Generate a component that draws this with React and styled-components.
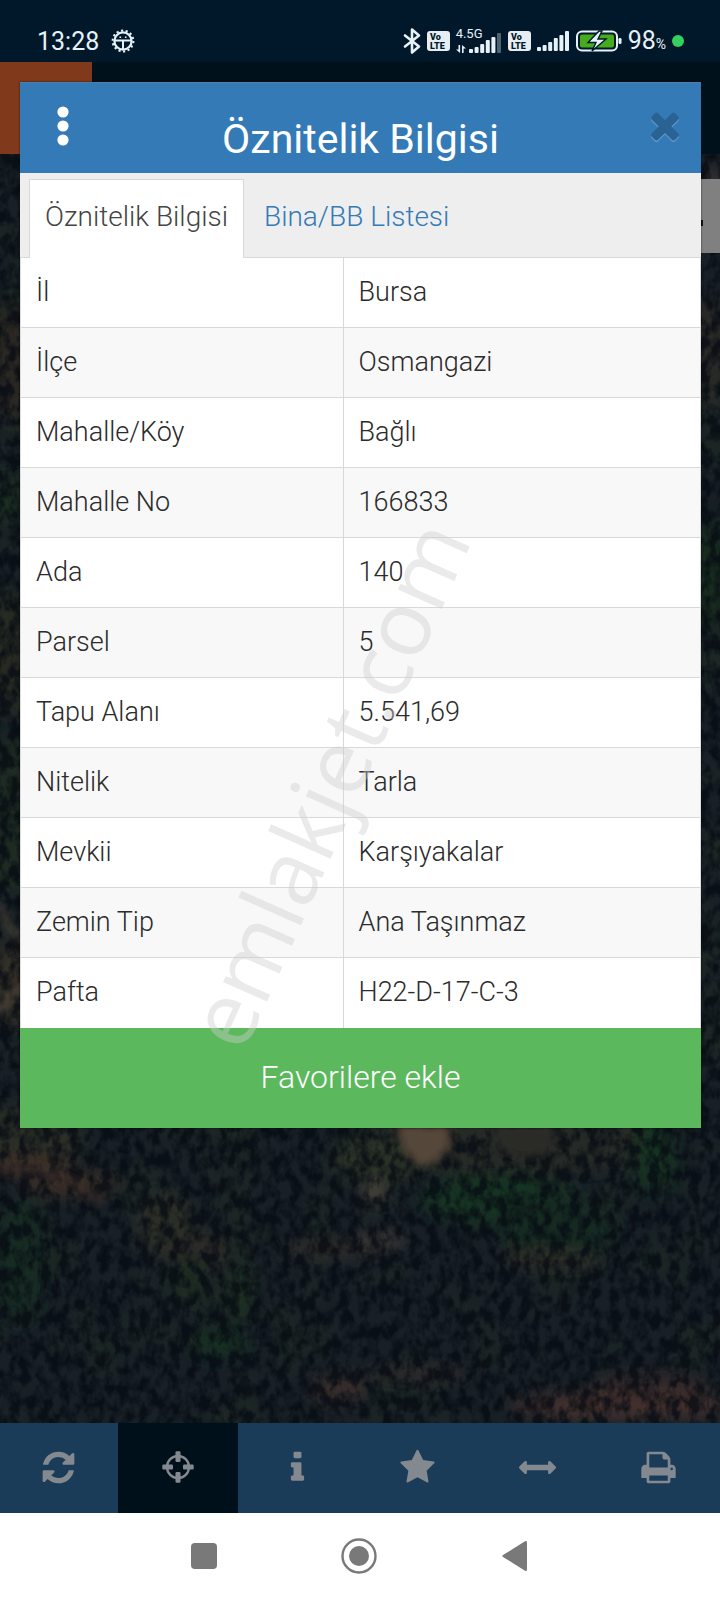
import React from "react";
import styled, { createGlobalStyle, css } from "styled-components";

const GlobalStyle = createGlobalStyle`
  *, *::before, *::after { box-sizing: border-box; }
  body {
    margin: 0;
    background: #ffffff;
    font-family: Roboto, "Liberation Sans", sans-serif;
  }
  button { font-family: inherit; cursor: pointer; }
`;

const Screen = styled.div`
  min-height: 100vh;
  display: flex;
  flex-direction: column;
`;

/* ---------- status bar ---------- */

const StatusBar = styled.header`
  height: 62px;
  flex: none;
  display: flex;
  align-items: flex-end;
  justify-content: space-between;
  padding: 0 36px 6px 37px;
  background: #01182b;
  color: #e6f2f8;
`;

const StatusGroup = styled.div`
  display: flex;
  align-items: center;
  height: 30px;
  gap: ${(p) => p.$gap || 0}px;
`;

const Clock = styled.time`
  padding-top: 2px;
  font-size: 25px;
  line-height: 30px;
  font-weight: 400;
`;

const NetworkStack = styled.div`
  display: flex;
  align-items: flex-end;
  justify-content: space-between;
  width: 46px;
  height: 24px;
  position: relative;
`;

const NetworkType = styled.span`
  position: absolute;
  left: 0;
  top: 0;
  font-size: 13px;
  line-height: 10px;
  font-weight: 400;
`;

const Battery = styled.span`
  display: flex;
  align-items: baseline;
  padding-top: 2px;
  font-size: 25px;
  line-height: 30px;
  font-weight: 400;
  small {
    font-size: 14px;
  }
`;

const ActiveDot = styled.span`
  width: 12px;
  height: 12px;
  border-radius: 50%;
  background: #34cf5c;
`;

/* ---------- app and map ---------- */

const Stage = styled.main`
  flex: 1;
  display: grid;
  grid-template: minmax(0, 1fr) / minmax(0, 1fr);
`;

const AppLayer = styled.div`
  grid-area: 1 / 1;
  display: flex;
  flex-direction: column;
`;

const AppBar = styled.div`
  height: 92px;
  flex: none;
  display: flex;
  background: #00111c;
`;

const AppMenu = styled.div`
  width: 92px;
  background: #803a1b;
`;

const MapArea = styled.div`
  flex: 1;
  position: relative;
  overflow: hidden;
  background: #10191d;
`;

const MapCanvas = styled.svg`
  position: absolute;
  inset: 0;
  width: 100%;
  height: 100%;
`;

const MapControl = styled.div`
  position: absolute;
  top: 25px;
  right: 0;
  width: 72px;
  height: 74px;
  display: flex;
  align-items: center;
  justify-content: center;
  background: #808080;
`;

/* ---------- dialog ---------- */

const DialogLayer = styled.div`
  grid-area: 1 / 1;
  z-index: 1;
  padding: 20px 19px 20px 20px;
`;

const Dialog = styled.section`
  position: relative;
  background: #ffffff;
  box-shadow: 0 0 2px rgba(0, 0, 0, 0.6);
`;

const DialogHeader = styled.div`
  height: 91px;
  display: grid;
  grid-template-columns: 86px 1fr 86px;
  align-items: center;
  background: #337ab7;
  border-top: 1px solid #4d7fab;
`;

const HeaderButton = styled.button`
  display: flex;
  align-items: center;
  justify-content: center;
  height: 60px;
  padding: 0 0 4px;
  border: 0;
  background: none;
  ${(p) =>
    p.$end &&
    css`
      padding-left: 14px;
    `}
`;

const DialogTitle = styled.h1`
  margin: 0;
  padding-top: 22px;
  text-align: center;
  font-size: 41px;
  line-height: 48px;
  font-weight: 400;
  color: #ffffff;
`;

const Tabs = styled.div`
  display: flex;
  align-items: flex-end;
  height: 85px;
  padding-left: 9px;
  background: #eeeeee;
  border-bottom: 1px solid #d8d8d8;
`;

const Tab = styled.button`
  height: 79px;
  margin-bottom: -1px;
  padding: 0 15px 4px;
  border: 1px solid transparent;
  border-bottom: 0;
  background: transparent;
  font-size: 28px;
  line-height: 32px;
  font-weight: 300;
  color: #337ab7;
  & + & {
    padding-left: 19px;
  }
  ${(p) =>
    p.$active &&
    css`
      background: #ffffff;
      border-color: #d8d8d8;
      color: #444444;
    `}
`;

const InfoTable = styled.table`
  width: 100%;
  table-layout: fixed;
  border-collapse: separate;
  border-spacing: 0;
  font-size: 27px;
  line-height: 32px;
  color: #2b2b2b;
  border-left: 1px solid #dddddd;
  border-right: 1px solid #dddddd;
`;

const InfoRow = styled.tr`
  background: #ffffff;
  &:nth-child(even) {
    background: #f8f8f8;
  }
  &:not(:last-child) > * {
    border-bottom: 1px solid #d8d8d8;
  }
`;

const cell = css`
  height: 70px;
  padding: 0 15px 2px;
  text-align: left;
  font-weight: 300;
`;

const InfoLabel = styled.th`
  ${cell}
  width: 47.5%;
  border-right: 1px solid #d8d8d8;
`;

const InfoValue = styled.td`
  ${cell}
`;

const FavoriteButton = styled.button`
  display: block;
  width: 100%;
  height: 100px;
  padding: 0 0 2px;
  border: 0;
  background: #5cb85c;
  color: #ffffff;
  font-size: 32px;
  line-height: 40px;
  font-weight: 300;
`;

const Watermark = styled.div`
  position: absolute;
  left: 45%;
  top: 67%;
  transform: translate(-50%, -50%) rotate(-66deg);
  font-family: "Open Sans", "Noto Sans", sans-serif;
  font-size: 90px;
  line-height: 90px;
  color: rgba(205, 205, 205, 0.42);
  white-space: nowrap;
  pointer-events: none;
`;

/* ---------- bottom bars ---------- */

const Toolbar = styled.nav`
  height: 90px;
  flex: none;
  display: grid;
  grid-template-columns: 118fr repeat(4, 120fr) 122fr;
  background: #1b3c59;
`;

const ToolButton = styled.button`
  display: flex;
  align-items: center;
  justify-content: center;
  padding: 0 1px 2px 0;
  border: 0;
  background: ${(p) => (p.$active ? "#00101b" : "transparent")};
  color: #83898f;
`;

const SystemNav = styled.nav`
  height: 87px;
  flex: none;
  display: flex;
  align-items: center;
  justify-content: center;
  gap: 115px;
  padding: 0 2px 2px 0;
  background: #ffffff;
`;

const NavButton = styled.button`
  width: 40px;
  height: 40px;
  display: flex;
  align-items: center;
  justify-content: center;
  padding: 0;
  border: 0;
  background: none;
  color: #797979;
`;

/* ---------- drawings ---------- */

const PATHS = {
  refresh:
    "M1639 1056q0 5-1 7-64 268-268 434.500t-478 166.500q-146 0-282.500-55t-243.500-157l-129 129q-19 19-45 19t-45-19-19-45v-448q0-26 19-45t45-19h448q26 0 45 19t19 45-19 45l-137 137q71 66 161 102t187 36q134 0 250-65t186-179q11-17 53-117 8-23 30-23h192q13 0 22.500 9.500t9.500 22.500zm25-800v448q0 26-19 45t-45 19h-448q-26 0-45-19t-19-45 19-45l138-138q-148-137-349-137-134 0-250 65t-186 179q-11 17-53 117-8 23-30 23h-199q-13 0-22.500-9.500t-9.500-22.500v-7q65-268 270-434.500t480-166.500q146 0 284 55.500t245 156.500l130-129q19-19 45-19t45 19 19 45z",
  info: "M1216 1344v128q0 26-19 45t-45 19h-512q-26 0-45-19t-19-45v-128q0-26 19-45t45-19h64v-384h-64q-26 0-45-19t-19-45v-128q0-26 19-45t45-19h384q26 0 45 19t19 45v576h64q26 0 45 19t19 45zm-128-1152v192q0 26-19 45t-45 19h-256q-26 0-45-19t-19-45v-192q0-26 19-45t45-19h256q26 0 45 19t19 45z",
  star: "M1728 647q0 22-26 48l-363 354 86 500q1 7 1 20 0 21-10.500 35.500t-30.500 14.500q-19 0-40-12l-449-236-449 236q-22 12-40 12-21 0-31.500-14.500t-10.500-35.500q0-6 2-20l86-500-364-354q-25-27-25-48 0-37 56-46l502-73 225-455q19-41 49-41t49 41l225 455 502 73q56 9 56 46z",
  measure:
    "M1792 896q0 26-19 45l-256 256q-19 19-45 19t-45-19-19-45v-128h-1024v128q0 26-19 45t-45 19-45-19l-256-256q-19-19-19-45t19-45l256-256q19-19 45-19t45 19 19 45v128h1024v-128q0-26 19-45t45-19 45 19l256 256q19 19 19 45z",
  print:
    "M448 1536h896v-256h-896v256zm0-640h896v-384h-160q-40 0-68-28t-28-68v-160h-640v640zm1152 64q0-26-19-45t-45-19-45 19-19 45 19 45 45 19 45-19 19-45zm128 0v416q0 13-9.500 22.500t-22.500 9.500h-224v160q0 40-28 68t-68 28h-960q-40 0-68-28t-28-68v-160h-224q-13 0-22.500-9.500t-9.500-22.500v-416q0-79 56.500-135.500t135.500-56.500h64v-544q0-40 28-68t68-28h672q40 0 88 20t76 48l152 152q28 28 48 76t20 88v256h64q79 0 135.500 56.500t56.500 135.500z",
  close:
    "M1490 1322q0 40-28 68l-136 136q-28 28-68 28t-68-28l-294-294-294 294q-28 28-68 28t-68-28l-136-136q-28-28-28-68t28-68l294-294-294-294q-28-28-28-68t28-68l136-136q28-28 68-28t68 28l294 294 294-294q28-28 68-28t68 28l136 136q28 28 28 68t-28 68l-294 294 294 294q28 28 28 68z",
};

function Glyph({ name, size = 37 }) {
  return (
    <svg width={size} height={size} viewBox="0 0 1792 1792" fill="currentColor" aria-hidden="true">
      <path d={PATHS[name]} />
    </svg>
  );
}

function LocateIcon() {
  return (
    <svg width="32" height="32" viewBox="0 0 32 32" fill="currentColor" aria-hidden="true">
      <circle cx="16" cy="16" r="11" fill="none" stroke="currentColor" strokeWidth="2.4" />
      {[0, 90, 180, 270].map((turn) => (
        <rect key={turn} x="13.500" y="0.300" width="5" height="10.700" rx="1.200" transform={`rotate(${turn} 16 16)`} />
      ))}
    </svg>
  );
}

function CloseIcon() {
  return (
    <svg width="42" height="44" viewBox="0 0 1792 1877" aria-hidden="true">
      <path d={PATHS.close} fill="#5d97c8" transform="translate(0 70)" />
      <path d={PATHS.close} fill="#2a6293" />
    </svg>
  );
}

function DotsIcon() {
  return (
    <svg width="12" height="40" viewBox="0 0 12 40" fill="#ffffff" aria-hidden="true">
      <circle cx="6" cy="6" r="5.600" />
      <circle cx="6" cy="20" r="5.600" />
      <circle cx="6" cy="34" r="5.600" />
    </svg>
  );
}

function WheelIcon() {
  return (
    <svg width="24" height="24" viewBox="0 0 24 24" fill="none" stroke="#e6f2f8" aria-hidden="true">
      <circle cx="12" cy="12" r="8.600" strokeWidth="2.200" />
      <circle cx="12" cy="12" r="10.400" strokeWidth="2" strokeDasharray="2.200 2.467" />
      <path d="M4 11.500h16M12 12v8" strokeWidth="2" />
      <path d="M8.500 8.200h1.600M13.900 8.200h1.600" strokeWidth="1.500" />
    </svg>
  );
}

function BluetoothIcon() {
  return (
    <svg width="18" height="28" viewBox="0 0 18 28" fill="none" stroke="#e6f2f8" strokeWidth="2.600" strokeLinejoin="round" strokeLinecap="round" aria-hidden="true">
      <path d="M2 8.500l14 11-7 6V2.500l7 6-14 11" />
    </svg>
  );
}

function VolteIcon() {
  return (
    <svg width="23" height="20" viewBox="0 0 23 20" aria-label="VoLTE">
      <rect width="23" height="20" rx="3" fill="#e6eef2" />
      <g fill="#01182b" fontFamily="Roboto, sans-serif" fontWeight="900">
        <text x="3" y="9" fontSize="9">Vo</text>
        <text x="3" y="18" fontSize="9">LTE</text>
      </g>
    </svg>
  );
}

function SignalIcon({ weak }) {
  return (
    <svg width="33" height="20" viewBox="0 0 33 20" fill="#e6f2f8" aria-hidden="true">
      {[4, 6, 9, 13, 16, 20].map((h, i) => (
        <rect key={i} x={i * 5.6} y={20 - h} width="4" height={h} rx="1" opacity={weak && i === 5 ? 0.35 : 1} />
      ))}
    </svg>
  );
}

function TrafficIcon() {
  return (
    <svg width="10" height="8" viewBox="0 0 10 8" fill="#e6f2f8" aria-hidden="true">
      <path d="M2.500 0h1.600v8L0 4.500h2.500zM6 0l4 3.500H7.600V8H6z" />
    </svg>
  );
}

function BatteryIcon() {
  return (
    <svg width="46" height="22" viewBox="0 0 46 22" aria-hidden="true">
      <rect x="1" y="1.500" width="40" height="19" rx="5" fill="none" stroke="#e6f2f8" strokeWidth="2" />
      <rect x="4" y="4.500" width="34" height="13" rx="2" fill="#46ab1d" />
      <rect x="42.500" y="8" width="3" height="6" rx="1.200" fill="#e6f2f8" />
      <path d="M23 1L12 12.500h8L16 21l14-12h-8l4-8z" fill="#e6f2f8" stroke="#01182b" strokeWidth="1.400" />
    </svg>
  );
}

const CLEARINGS = [
  [14, 210, 22, 60, "#2b2822"], [10, 345, 24, 26, "#1b2f20"], [12, 500, 26, 60, "#252b22"],
  [10, 660, 20, 80, "#1f2b22"], [12, 830, 20, 44, "#332f27"], [710, 40, 18, 26, "#353330"],
  [708, 200, 16, 60, "#2b2a26"], [708, 420, 16, 60, "#182a1f"], [20, 985, 60, 32, "#2c2d26"],
  [520, 985, 140, 38, "#252c28"], [380, 1005, 50, 24, "#2b3128"], [70, 1030, 50, 12, "#3a2e27"],
  [30, 1010, 44, 10, "#3a2d25"], [165, 1070, 30, 34, "#2c2d27"], [500, 1045, 80, 26, "#163122"],
  [560, 1075, 60, 34, "#162a20"], [655, 1000, 20, 40, "#183321"], [200, 1100, 30, 22, "#2a2a25"],
  [238, 1140, 12, 32, "#1d3324"], [190, 1130, 20, 28, "#1f2b22"], [20, 1110, 24, 64, "#182b22"],
  [220, 1190, 30, 16, "#182d22"], [330, 1095, 50, 8, "#332e2a"], [382, 1086, 26, 7, "#453e38"],
  [375, 1040, 12, 16, "#454338"], [550, 1105, 50, 8, "#35302b"], [340, 1235, 30, 14, "#382e2b"],
  [420, 1220, 50, 8, "#2e2a2a"], [620, 1252, 110, 13, "#46322d"], [650, 1234, 60, 12, "#382c2a"],
];

function ForestMap() {
  return (
    <MapCanvas viewBox="0 0 720 1269" preserveAspectRatio="xMidYMid slice" aria-hidden="true">
      <defs>
        <filter id="soften" x="-50%" y="-50%" width="200%" height="200%">
          <feGaussianBlur stdDeviation="8" />
        </filter>
        <filter id="edge" x="-20%" y="-20%" width="140%" height="140%">
          <feGaussianBlur stdDeviation="4" />
        </filter>
        <filter id="canopy" x="0" y="0" width="100%" height="100%" colorInterpolationFilters="sRGB">
          <feTurbulence type="fractalNoise" baseFrequency="0.1 0.07" numOctaves="3" seed="8" />
          <feColorMatrix values="0 0 0 0 0.02  0 0 0 0 0.04  0 0 0 0 0.07  3.2 0 0 0 -1.15" />
        </filter>
        <filter id="tint" x="0" y="0" width="100%" height="100%" colorInterpolationFilters="sRGB">
          <feTurbulence type="fractalNoise" baseFrequency="0.015" numOctaves="3" seed="4" />
          <feColorMatrix values="0 0 0 0 0.12  0 0 0 0 0.17  0 0 0 0 0.14  0 4 0 0 -1.9" />
        </filter>
      </defs>
      <rect width="720" height="1269" fill="#182026" />
      <rect width="720" height="1269" filter="url(#tint)" opacity="0.6" />
      <g filter="url(#soften)">
        {CLEARINGS.map(([x, y, rx, ry, fill], i) => (
          <ellipse key={i} cx={x} cy={y} rx={rx} ry={ry} fill={fill} />
        ))}
      </g>
      <rect width="720" height="1269" filter="url(#canopy)" opacity="0.75" />
      <g filter="url(#edge)">
        <path d="M395 970l55 2 0 22-20 18-14-2-14-18z" fill="#57463a" />
        <path d="M490 970h64l-2 26-26 8-26-8z" fill="#2b2b27" />
        <path d="M0 1018q30-8 58 4t44 26" fill="none" stroke="#3c2f29" strokeWidth="6" />
        <path d="M0 750q6 24 20 34M0 862q6-24 20-28" fill="none" stroke="#534a3c" strokeWidth="5" />
      </g>
    </MapCanvas>
  );
}

/* ---------- data ---------- */

const ROWS = [
  ["İl", "Bursa"],
  ["İlçe", "Osmangazi"],
  ["Mahalle/Köy", "Bağlı"],
  ["Mahalle No", "166833"],
  ["Ada", "140"],
  ["Parsel", "5"],
  ["Tapu Alanı", "5.541,69"],
  ["Nitelik", "Tarla"],
  ["Mevkii", "Karşıyakalar"],
  ["Zemin Tip", "Ana Taşınmaz"],
  ["Pafta", "H22-D-17-C-3"],
];

const TOOLS = [
  ["refresh", "Yenile"],
  ["locate", "Konum"],
  ["info", "Bilgi"],
  ["star", "Favoriler"],
  ["measure", "Ölçüm"],
  ["print", "Yazdır"],
];

export default function App() {
  return (
    <Screen>
      <GlobalStyle />
      <StatusBar>
        <StatusGroup $gap={12}>
          <Clock>13:28</Clock>
          <WheelIcon />
        </StatusGroup>
        <StatusGroup $gap={6}>
          <BluetoothIcon />
          <VolteIcon />
          <NetworkStack>
            <NetworkType>4.5G</NetworkType>
            <TrafficIcon />
            <SignalIcon weak />
          </NetworkStack>
          <VolteIcon />
          <SignalIcon />
          <BatteryIcon />
          <Battery>
            98<small>%</small>
          </Battery>
          <ActiveDot />
        </StatusGroup>
      </StatusBar>

      <Stage>
        <AppLayer>
          <AppBar>
            <AppMenu />
          </AppBar>
          <MapArea>
            <ForestMap />
            <MapControl>
              <svg width="38" height="34" viewBox="0 0 38 34" aria-hidden="true">
                <path d="M2 6h26M2 24h36" stroke="#111111" strokeWidth="6" />
              </svg>
            </MapControl>
          </MapArea>
        </AppLayer>

        <DialogLayer>
          <Dialog role="dialog" aria-labelledby="dialog-title">
            <DialogHeader>
              <HeaderButton type="button" aria-label="Menü">
                <DotsIcon />
              </HeaderButton>
              <DialogTitle id="dialog-title">Öznitelik Bilgisi</DialogTitle>
              <HeaderButton type="button" aria-label="Kapat" $end>
                <CloseIcon />
              </HeaderButton>
            </DialogHeader>
            <Tabs role="tablist">
              <Tab type="button" role="tab" aria-selected="true" $active>
                Öznitelik Bilgisi
              </Tab>
              <Tab type="button" role="tab" aria-selected="false">
                Bina/BB Listesi
              </Tab>
            </Tabs>
            <InfoTable>
              <tbody>
                {ROWS.map(([label, value]) => (
                  <InfoRow key={label}>
                    <InfoLabel scope="row">{label}</InfoLabel>
                    <InfoValue>{value}</InfoValue>
                  </InfoRow>
                ))}
              </tbody>
            </InfoTable>
            <FavoriteButton type="button">Favorilere ekle</FavoriteButton>
            <Watermark aria-hidden="true">emlakjet.com</Watermark>
          </Dialog>
        </DialogLayer>
      </Stage>

      <Toolbar aria-label="Harita araçları">
        {TOOLS.map(([name, label]) => (
          <ToolButton key={name} type="button" aria-label={label} $active={name === "locate"}>
            {name === "locate" ? <LocateIcon /> : <Glyph name={name} />}
          </ToolButton>
        ))}
      </Toolbar>

      <SystemNav aria-label="Sistem gezinmesi">
        <NavButton type="button" aria-label="Son uygulamalar">
          <svg width="26" height="26" viewBox="0 0 26 26" fill="currentColor">
            <rect width="26" height="26" rx="4" />
          </svg>
        </NavButton>
        <NavButton type="button" aria-label="Ana ekran">
          <svg width="36" height="36" viewBox="0 0 36 36" fill="currentColor">
            <circle cx="18" cy="18" r="16.500" fill="none" stroke="currentColor" strokeWidth="2.400" />
            <circle cx="18" cy="18" r="10" />
          </svg>
        </NavButton>
        <NavButton type="button" aria-label="Geri">
          <svg width="25" height="30" viewBox="0 0 25 30" fill="currentColor">
            <path d="M23 .3Q25-.5 25 1.500v27q0 2-2 1.200L1 16q-1.200-1 0-2z" />
          </svg>
        </NavButton>
      </SystemNav>
    </Screen>
  );
}
